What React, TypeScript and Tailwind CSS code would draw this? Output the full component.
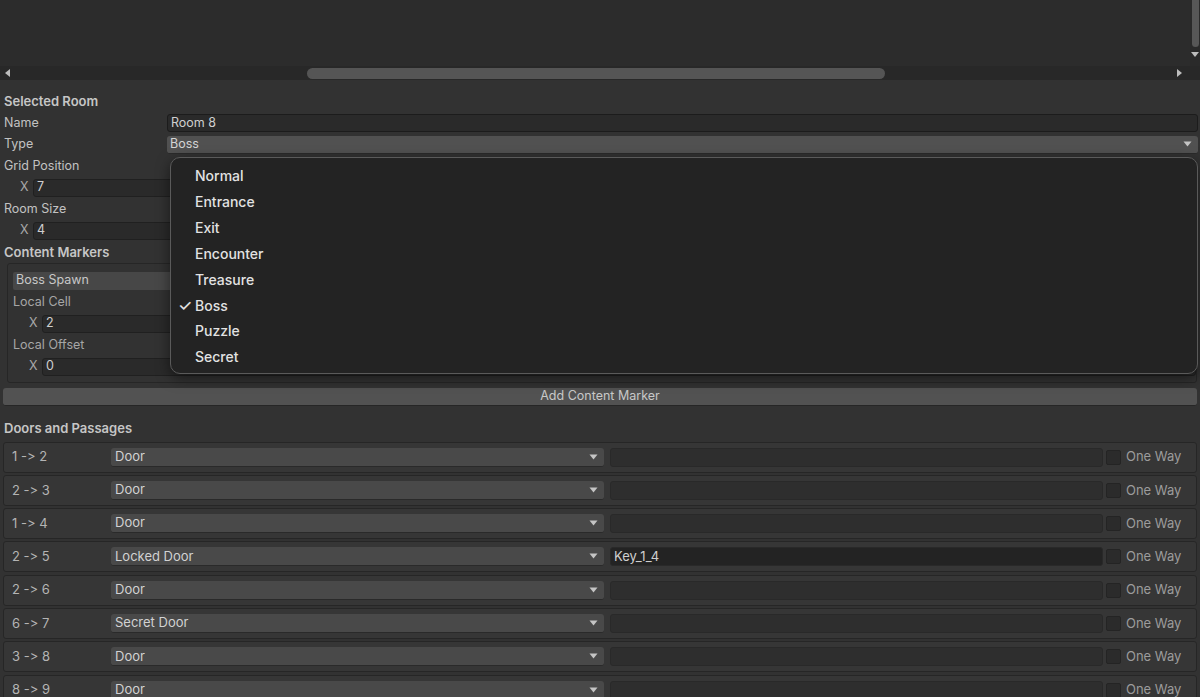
import React from "react";

const roomTypes = ["Normal", "Entrance", "Exit", "Encounter", "Treasure", "Boss", "Puzzle", "Secret"];

const doors = [
  { link: "1 -> 2", kind: "Door", key: "" },
  { link: "2 -> 3", kind: "Door", key: "" },
  { link: "1 -> 4", kind: "Door", key: "" },
  { link: "2 -> 5", kind: "Locked Door", key: "Key_1_4" },
  { link: "2 -> 6", kind: "Door", key: "" },
  { link: "6 -> 7", kind: "Secret Door", key: "" },
  { link: "3 -> 8", kind: "Door", key: "" },
  { link: "8 -> 9", kind: "Door", key: "" },
];

function Caret() {
  return (
    <svg width="9" height="6" viewBox="0 0 9 6" className="shrink-0">
      <path d="M0.5 0.5h8L4.5 5.5z" fill="#c4c4c4" />
    </svg>
  );
}

function Row({ children }: { children: React.ReactNode }) {
  return <div className="h-[21.5px] flex items-center">{children}</div>;
}

function VecField({ value, indent }: { value: string; indent: string }) {
  return (
    <Row>
      <span className={`${indent} w-[13px] text-[#a9a9a9]`}>X</span>
      <div className="flex-1 h-[18px] bg-[#2a2a2a] border border-[#202020] rounded-[3px] px-[3px] flex items-center text-[#cfcfcf]">
        {value}
      </div>
    </Row>
  );
}

function DoorRow({ link, kind, keyName }: { link: string; kind: string; keyName: string }) {
  return (
    <div className="h-[31px] flex items-center bg-[#363636] border border-[#262626] rounded-[3px] pl-[8px] text-[13px] whitespace-nowrap">
      <span className="w-[99px] shrink-0 text-[#b4b4b4]">{link}</span>
      <div className="w-[493px] shrink-0 h-[19px] bg-[#494949] border-b border-[#2a2a2a] rounded-[3px] pl-[4px] pr-[6px] flex items-center justify-between text-[#d2d2d2]">
        <span>{kind}</span>
        <Caret />
      </div>
      <div
        className={`ml-[6px] w-[493px] shrink-0 h-[19px] border border-[#292929] rounded-[3px] px-[3px] flex items-center text-[#cfcfcf] ${
          keyName ? "bg-[#232323]" : "bg-[#2e2e2e]"
        }`}
      >
        {keyName}
      </div>
      <div className="ml-[3px] shrink-0 w-[15px] h-[15px] bg-[#2b2b2b] border border-[#242424] rounded-[2px]" />
      <span className="ml-[5px] text-[#9c9c9c]">One Way</span>
    </div>
  );
}

export default function App() {
  return (
    <div
      className="w-[1200px] h-[697px] overflow-hidden bg-[#323232] text-[12.5px] relative [font-feature-settings:'calt'_0,'liga'_0]"
      style={{ fontFamily: "Inter, 'Noto Sans', sans-serif" }}
    >
      {/* canvas + scrollbars */}
      <div className="h-[66px] flex bg-[#2c2c2c]">
        <div className="flex-1" />
        <div className="w-[10px] flex flex-col items-center bg-[#2a2a2a]">
          <div className="w-[7px] h-[47px] bg-[#575757] rounded-b-[4px]" />
          <svg width="8" height="6" viewBox="0 0 8 6" className="mt-[5px]">
            <path d="M0 0h8L4 5z" fill="#bdbdbd" />
          </svg>
        </div>
      </div>
      <div className="h-[14px] flex items-center bg-[#282828] pr-[10px]">
        <svg width="6" height="8" viewBox="0 0 6 8" className="ml-[5px]">
          <path d="M5 0v8L0 4z" fill="#bdbdbd" />
        </svg>
        <div className="ml-[296px] w-[578px] h-[11px] bg-[#555555] rounded-full" />
        <div className="flex-1" />
        <svg width="6" height="8" viewBox="0 0 6 8" className="mr-[7px]">
          <path d="M0 0v8L5 4z" fill="#bdbdbd" />
        </svg>
      </div>

      {/* inspector */}
      <div className="pt-[11px] pl-[4px] pr-[2px] text-[#c2c2c2]">
        <Row>
          <span className="font-semibold text-[13px] text-[#c6c6c6]">Selected Room</span>
        </Row>
        <Row>
          <span className="w-[163px]">Name</span>
          <div className="flex-1 h-[18px] bg-[#2a2a2a] border border-[#1c1c1c] rounded-[3px] px-[3px] flex items-center text-[#cfcfcf]">
            Room 8
          </div>
        </Row>
        <Row>
          <span className="w-[163px]">Type</span>
          <div className="flex-1 h-[18px] bg-[#515151] border-b border-[#2a2a2a] rounded-[3px] pl-[3px] pr-[6px] flex items-center justify-between text-[#d4d4d4]">
            <span>Boss</span>
            <Caret />
          </div>
        </Row>
        <Row>
          <span>Grid Position</span>
        </Row>
        <VecField value="7" indent="ml-[16px]" />
        <Row>
          <span>Room Size</span>
        </Row>
        <VecField value="4" indent="ml-[16px]" />
        <Row>
          <span className="font-semibold text-[13px] text-[#c6c6c6]">Content Markers</span>
        </Row>

        <div className="ml-[3px] mr-[1px] border border-[#262626] rounded-[3px] bg-[#323232] pt-[6px] pb-[4px] pl-[5px]">
          <Row>
            <div className="flex-1 h-[18px] bg-[#474747] rounded-[2px] px-[3px] flex items-center text-[#c8c8c8]">
              Boss Spawn
            </div>
          </Row>
          <Row>
            <span className="text-[#a6a6a6]">Local Cell</span>
          </Row>
          <VecField value="2" indent="ml-[16px]" />
          <Row>
            <span className="text-[#a6a6a6]">Local Offset</span>
          </Row>
          <VecField value="0" indent="ml-[16px]" />
        </div>

        <div className="mt-[5px] mr-[1px] -ml-[1px] h-[18px] bg-[#525252] rounded-[3px] border-b border-[#262626] flex items-center justify-center text-[#c8c8c8]">
          Add Content Marker
        </div>

        <div className="mt-[13px] h-[21px] flex items-center">
          <span className="font-semibold text-[13px] text-[#c6c6c6]">Doors and Passages</span>
        </div>
      </div>

      <div className="mt-[2px] px-[3px] flex flex-col gap-[2.3px]">
        {doors.map((d) => (
          <DoorRow key={d.link} link={d.link} kind={d.kind} keyName={d.key} />
        ))}
      </div>

      {/* type popup */}
      <div className="absolute left-[170px] top-[157px] w-[1028px] h-[217px] rounded-[10px] border border-[#5a5a5a] bg-[#232323] shadow-[0_4px_14px_rgba(0,0,0,0.5)] pt-[5px]">
        {roomTypes.map((t) => (
          <div key={t} className="h-[25.85px] flex items-center text-[14px] font-medium text-[#e2e2e2]">
            <span className="w-[24px] pl-[7px] text-[16px] leading-none">{t === "Boss" ? "✓" : ""}</span>
            <span>{t}</span>
          </div>
        ))}
      </div>
    </div>
  );
}
